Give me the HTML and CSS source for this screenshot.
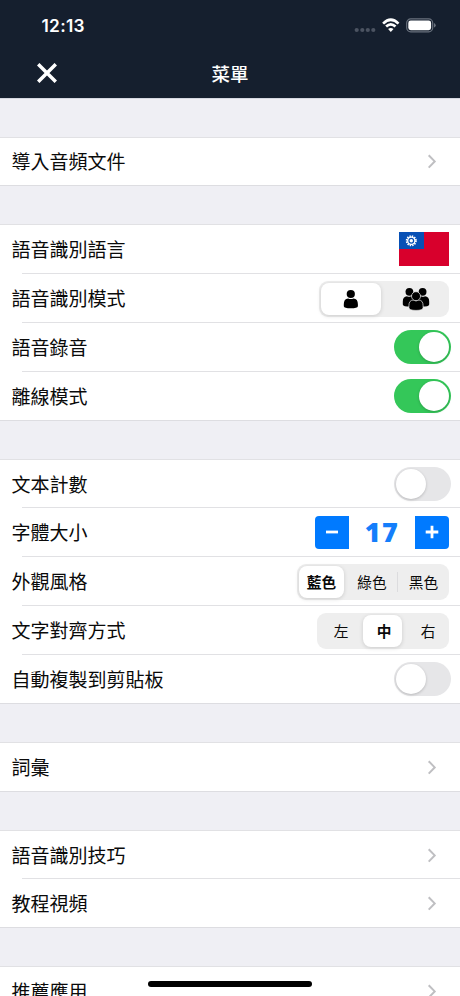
FILE: index.html
```html
<!DOCTYPE html>
<html lang="zh-Hant">
<head>
<meta charset="utf-8">
<title>菜單</title>
<link rel="stylesheet" href="styles.css">
</head>
<body>
<svg width="0" height="0" class="defs">
  <symbol id="chevron" viewBox="0 0 10 16"><path d="M1.7 2.2 7.7 8.4 1.7 14.6" fill="none" stroke="#bfbfc2" stroke-width="2"/></symbol>
</svg>
<div class="screen">
  <header class="header">
    <div class="status">
      <span class="time">12:13</span>
      <svg class="indicators" width="84" height="18" viewBox="0 0 84 18">
        <g fill="#4b5361"><circle cx="3.7" cy="13" r="2.1"/><circle cx="9.3" cy="13" r="2.1"/><circle cx="14.8" cy="13" r="2.1"/><circle cx="20.3" cy="13" r="2.1"/></g>
        <g fill="none" stroke="#fff" stroke-width="2.7"><path d="M30.1 6.6Q37.8-1 45.5 6.6"/><path d="M33.1 9.6Q37.8 5.2 42.5 9.6"/></g>
        <path d="M35.1 12.1Q37.8 9.8 40.5 12.1L37.8 14.9Z" fill="#fff"/>
        <rect x="53.7" y="1.9" width="26" height="12.9" rx="4" fill="none" stroke="#69717d" stroke-width="1.2"/>
        <rect x="55.3" y="3.5" width="22.8" height="9.7" rx="2.4" fill="#fff"/>
        <path d="M81 6Q82.7 6.7 82.7 8.3T81 10.6Z" fill="#69717d"/>
      </svg>
    </div>
    <div class="nav">
      <svg class="close" width="20" height="20" viewBox="0 0 20 20"><path d="M1.2 1.2 18.8 18.8M18.8 1.2 1.2 18.8" stroke="#fff" stroke-width="3.5"/></svg>
      <h1 class="title">菜單</h1>
    </div>
  </header>

  <section class="group first">
    <div class="row"><span>導入音頻文件</span><svg class="chevron"><use href="#chevron"/></svg></div>
  </section>

  <section class="group">
    <div class="row"><span>語音識別語言</span>
      <svg class="flag" width="50" height="34" viewBox="0 0 50 34"><path fill="#d8002c" d="M0 0h50v34H0z"/><path fill="#0750b5" d="M0 0h25v17H0z"/><circle cx="12.3" cy="8.8" r="4.6" fill="none" stroke="#fff" stroke-width="1.9" stroke-dasharray="1.35 1.058"/><circle cx="12.3" cy="8.8" r="3.6" fill="none" stroke="#fff" stroke-width="1.3"/><circle cx="12.3" cy="8.8" r="1.7" fill="#fff"/></svg>
    </div>
    <div class="row"><span>語音識別模式</span>
      <div class="segments mode">
        <span class="segment on"><svg width="16" height="20" viewBox="0 0 16 20"><circle cx="7.8" cy="5" r="4.1"/><path d="M.8 15.2Q.8 9.7 5.1 9.4Q7.8 10.8 10.5 9.4Q14.9 9.7 14.9 15.2V17.2Q14.5 19.2 7.8 19.2T.8 17.2Z"/></svg></span>
        <span class="segment"><svg width="28" height="24" viewBox="0 0 28 24"><circle cx="7.4" cy="4.8" r="3.9"/><circle cx="20.6" cy="4.8" r="3.9"/><path d="M.8 14.4Q.8 9.4 5 9.2Q7 10.2 9 9.2L13 13 12 19.5Q1 20 .8 17.4ZM27.2 14.4Q27.2 9.4 23 9.2Q21 10.2 19 9.2L15 13 16 19.5Q27 20 27.2 17.4Z"/><g stroke="#eee" stroke-width=".7"><path d="M6.9 18.8Q6.9 13.2 11.2 13Q14 14.8 16.8 13Q21.1 13.2 21.1 18.8V20.8Q20.8 23.4 14 23.4T6.9 20.8Z"/><circle cx="14" cy="9.2" r="4.5"/></g></svg></span>
      </div>
    </div>
    <div class="row"><span>語音錄音</span><span class="switch on"></span></div>
    <div class="row"><span>離線模式</span><span class="switch on"></span></div>
  </section>

  <section class="group">
    <div class="row"><span>文本計數</span><span class="switch"></span></div>
    <div class="row"><span>字體大小</span>
      <div class="stepper">
        <span class="step minus"><svg width="14" height="14" viewBox="0 0 14 14"><path d="M1 7h12"/></svg></span>
        <span class="value">17</span>
        <span class="step plus"><svg width="14" height="14" viewBox="0 0 14 14"><path d="M.7 7h12.6M7 .7v12.6"/></svg></span>
      </div>
    </div>
    <div class="row"><span>外觀風格</span>
      <div class="segments theme"><span class="segment on">藍色</span><span class="segment">綠色</span><span class="segment divided">黑色</span></div>
    </div>
    <div class="row"><span>文字對齊方式</span>
      <div class="segments align"><span class="segment">左</span><span class="segment on">中</span><span class="segment">右</span></div>
    </div>
    <div class="row"><span>自動複製到剪貼板</span><span class="switch"></span></div>
  </section>

  <section class="group">
    <div class="row"><span>詞彙</span><svg class="chevron"><use href="#chevron"/></svg></div>
  </section>

  <section class="group">
    <div class="row"><span>語音識別技巧</span><svg class="chevron"><use href="#chevron"/></svg></div>
    <div class="row"><span>教程視頻</span><svg class="chevron"><use href="#chevron"/></svg></div>
  </section>

  <section class="group">
    <div class="row"><span>推薦應用</span><svg class="chevron"><use href="#chevron"/></svg></div>
  </section>
  <div class="home-bar"></div>
</div>
</body>
</html>
```
FILE: styles.css
```css
* { box-sizing: border-box; }
html, body { margin: 0; height: 996px; overflow: hidden; }
body {
  font-family: "Noto Sans CJK TC", sans-serif;
  color: #0a0a0a;
}
.defs { position: absolute; }
.screen {
  position: relative;
  width: 460px;
  height: 996px;
  overflow: hidden;
  background: #efeff4;
}

.header {
  height: 98px;
  background: #151f2e;
  color: #fff;
}
.status {
  display: flex;
  justify-content: space-between;
  align-items: center;
  height: 50px;
  padding: 1px 23px 0 41.5px;
}
.time {
  font: 600 17.3px/20px Inter, sans-serif;
  letter-spacing: 0.3px;
}
.indicators { margin-top: 1px; }
.nav {
  display: grid;
  grid-template-columns: 93px 1fr 93px;
  align-items: center;
  height: 46px;
}
.close { margin-left: 37px; }
.title {
  margin: 0;
  font-size: 18.5px;
  line-height: 28px;
  font-weight: 500;
  text-align: center;
}

.group {
  padding-top: 39px;
  background: linear-gradient(#dddde1, #dddde1) 0 0 / 100% 1px no-repeat;
}
.group.first {
  padding-top: 38.5px;
  background-image: linear-gradient(#d5d8e0, #d5d8e0);
}
.row {
  display: flex;
  align-items: center;
  justify-content: space-between;
  height: 48.83px;
  padding: 1px 12px 0 11.6px;
  font-size: 19px;
  line-height: 28px;
  background: linear-gradient(#e1e1e4, #e1e1e4) 22px 0 / 100% 1px no-repeat #fff;
}
.row:first-child { background-position: 0 0; }
.chevron { width: 10px; height: 16px; margin-right: 11.4px; }
.flag { margin-right: -1px; }

.switch {
  width: 57px;
  height: 34px;
  margin-right: -3px;
  padding: 2px;
  border-radius: 17px;
  background: #e6e6e8;
}
.switch::before {
  content: "";
  display: block;
  width: 30px;
  height: 30px;
  border-radius: 50%;
  background: #fff;
  box-shadow: 0 1px 3px rgba(0, 0, 0, 0.2);
}
.switch.on { background: #34c759; }
.switch.on::before { margin-left: 23px; }

.segments {
  display: grid;
  height: 36px;
  margin: 1px -1px 0 0;
  padding: 2px;
  border-radius: 9px;
  background: #eee;
  font-size: 14.7px;
}
.segment {
  display: flex;
  align-items: center;
  justify-content: center;
  border-radius: 8px;
}
.segment.on {
  background: #fff;
  font-weight: 700;
  box-shadow: 0 1px 4px rgba(0, 0, 0, 0.15);
}
.mode { width: 130px; grid-template-columns: 60px 1fr; }
.mode .segment:last-child { padding-left: 4px; }
.theme { width: 152px; grid-template-columns: 45px 1fr 51px; }
.theme .segment:not(.on) { padding-left: 4px; }
.theme .divided {
  border-radius: 0;
  background: linear-gradient(#dcdcde, #dcdcde) 1px 50% / 1px 20px no-repeat;
}
.align { width: 132px; grid-template-columns: 44px 39px 1fr; }
.align .segment.on { padding-left: 3px; }
.align .segment:last-child { padding-left: 7px; }

.stepper {
  display: grid;
  grid-template-columns: 34px 66px 34px;
  height: 33px;
  margin-right: -1px;
}
.step {
  display: flex;
  align-items: center;
  justify-content: center;
  background: #007aff;
}
.step path { stroke: #fff; stroke-width: 2.8; }
.minus { border-radius: 4px 0 0 4px; }
.plus { border-radius: 0 4px 4px 0; }
.value {
  color: #147efb;
  font: 800 27px/31px "Open Sans", sans-serif;
  letter-spacing: 1.5px;
  text-align: center;
}

.home-bar {
  position: absolute;
  left: 148px;
  top: 981px;
  width: 164px;
  height: 6px;
  border-radius: 3px;
  background: #000;
}
```
